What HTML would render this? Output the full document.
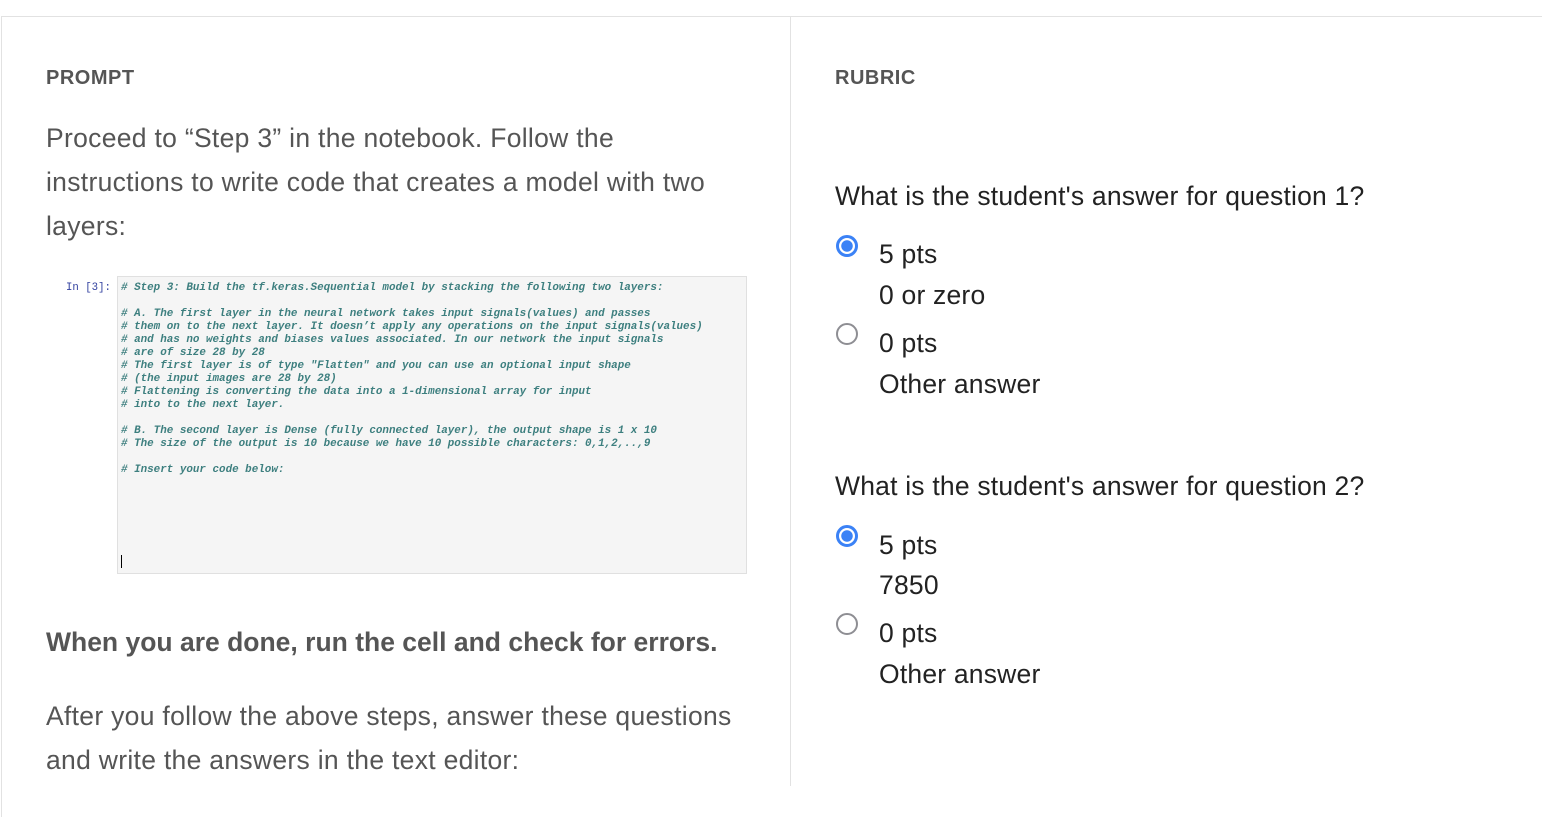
<!DOCTYPE html>
<html><head><style>
body{margin:0;background:#fff;font-family:"Liberation Sans",sans-serif;color:#4a4a4a;width:1542px;height:775px;overflow:hidden;position:relative}
.frame{position:absolute;left:1px;top:16px;width:1560px;height:800px;border-top:1px solid #e2e2e2;border-left:1px solid #e2e2e2}
.div{position:absolute;left:790px;top:16px;width:1px;height:770px;background:#e2e2e2}
.h{position:absolute;font-weight:bold;font-size:20px;color:#555;letter-spacing:0.5px}
.p{position:absolute;font-size:26.5px;line-height:44px;color:#555;white-space:nowrap;letter-spacing:0.3px}
.code{position:absolute;left:117px;top:276px;width:628px;height:296px;background:#f5f5f5;border:1px solid #e0e0e0}
.c{position:absolute;font-family:"Liberation Mono",monospace;font-style:italic;font-weight:bold;font-size:10.9px;color:#3d7f7f;white-space:pre;line-height:13px}
.in{position:absolute;left:66px;top:282px;font-family:"Liberation Mono",monospace;font-size:10.7px;color:#303f9f}
.r{position:absolute;font-size:26.5px;color:#222;white-space:nowrap;letter-spacing:0.2px}
.rad{position:absolute;width:22px;height:22px;border-radius:50%;box-sizing:border-box}
.on{border:3px solid #3b82f6;background:radial-gradient(circle,#3b82f6 0 5.5px,#fff 6px)}
.off{border:2.5px solid #8e8e93}
</style></head><body>
<div class="frame"></div><div class="div"></div>
<div class="h" style="left:46px;top:67px">PROMPT</div>
<div class="h" style="left:835px;top:67px">RUBRIC</div>
<div class="p" style="left:46px;top:116px">Proceed to “Step 3” in the notebook. Follow the<br>instructions to write code that creates a model with two<br>layers:</div>
<div class="in">In [3]:</div>
<div class="code"></div>
<div class="c" style="left:121px;top:282px"># Step 3: Build the tf.keras.Sequential model by stacking the following two layers:

# A. The first layer in the neural network takes input signals(values) and passes
# them on to the next layer. It doesn’t apply any operations on the input signals(values)
# and has no weights and biases values associated. In our network the input signals
# are of size 28 by 28
# The first layer is of type "Flatten" and you can use an optional input shape
# (the input images are 28 by 28)
# Flattening is converting the data into a 1-dimensional array for input
# into to the next layer.

# B. The second layer is Dense (fully connected layer), the output shape is 1 x 10
# The size of the output is 10 because we have 10 possible characters: 0,1,2,..,9

# Insert your code below:</div>
<div style="position:absolute;left:121px;top:555px;width:1px;height:13px;background:#000"></div>
<div class="p" style="left:46px;top:620px;font-weight:bold;letter-spacing:0">When you are done, run the cell and check for errors.</div>
<div class="p" style="left:46px;top:694px">After you follow the above steps, answer these questions<br>and write the answers in the text editor:</div>
<div class="r" style="left:835px;top:181px">What is the student's answer for question 1?</div>
<div class="rad on" style="left:836px;top:235px"></div>
<div class="r" style="left:879px;top:239px">5 pts</div>
<div class="r" style="left:879px;top:280px">0 or zero</div>
<div class="rad off" style="left:836px;top:323px"></div>
<div class="r" style="left:879px;top:328px">0 pts</div>
<div class="r" style="left:879px;top:369px">Other answer</div>
<div class="r" style="left:835px;top:471px">What is the student's answer for question 2?</div>
<div class="rad on" style="left:836px;top:525px"></div>
<div class="r" style="left:879px;top:530px">5 pts</div>
<div class="r" style="left:879px;top:570px">7850</div>
<div class="rad off" style="left:836px;top:613px"></div>
<div class="r" style="left:879px;top:618px">0 pts</div>
<div class="r" style="left:879px;top:659px">Other answer</div>
</body></html>
